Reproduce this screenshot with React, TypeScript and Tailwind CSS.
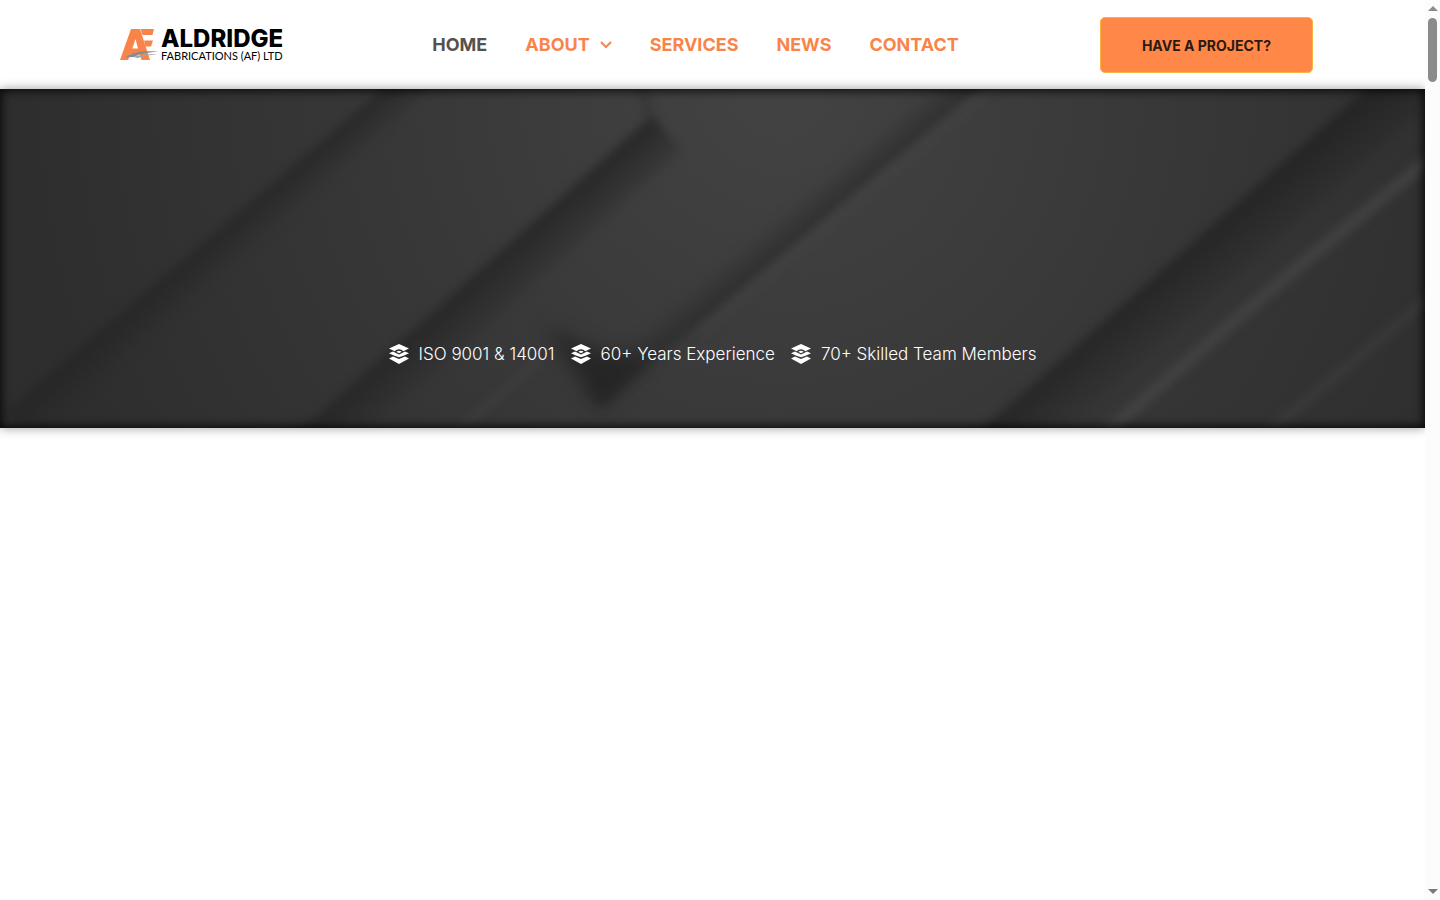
import React from 'react';

interface NavItem {
  label: string;
  active?: boolean;
  hasMenu?: boolean;
}

const navItems: NavItem[] = [
  { label: 'HOME', active: true },
  { label: 'ABOUT', hasMenu: true },
  { label: 'SERVICES' },
  { label: 'NEWS' },
  { label: 'CONTACT' },
];

const highlights = ['ISO 9001 & 14001', '60+ Years Experience', '70+ Skilled Team Members'];

function Logo() {
  return (
    <a href="#home" aria-label="Aldridge Fabrications (AF) Ltd" className="flex items-center px-2">
      <svg viewBox="0 0 40 34" className="h-[34px] w-10 shrink-0" aria-hidden="true">
        <path d="M11 1H20L30 32H21.500L19.500 26H10.500L8 32H0Z" fill="#f9844a" />
        <path d="M20.500 1H34L32.500 7H22.500Z" fill="#f9844a" />
        <path d="M24 12.500H33L31 18.500H25.500Z" fill="#f9844a" />
        <path d="M15.500 11L12.300 20.500H18Z" fill="#fff" />
        <path d="M5 29.500C13 24 20 22.500 39 23.500C29 24.500 21 25 14 29Z" fill="#8b8b8b" />
        <path d="M13 29C21 26 28 26 38 26.500C29 27 23 28 18 30Z" fill="#a3a3a3" />
      </svg>
      <span className="flex flex-col gap-px pl-px text-black">
        <span className="text-[24px] leading-5 font-extrabold">ALDRIDGE</span>
        <span className="font-['Lato',sans-serif] text-[11px] leading-3">FABRICATIONS (AF) LTD</span>
      </span>
    </a>
  );
}

function LayersIcon() {
  return (
    <svg viewBox="0 0 20 20" className="size-5 shrink-0" fill="currentColor" aria-hidden="true">
      <path d="M10 0L20 4.600L14.300 7.200Q12.500 5.200 10 5.200Q7.500 5.200 5.700 7.200L0 4.600Z" />
      <path d="M7.300 7.800Q10 5.600 12.700 7.800L10 9.200Z" />
      <path d="M0 9.300L4 7.500L10 10.400L16 7.500L20 9.300L14.500 11.800L10 13.200L5.500 11.800Z" />
      <path d="M0 14.500L4 12.400L10 15L16 12.400L20 14.500L10 20Z" />
    </svg>
  );
}

function Header() {
  return (
    <header className="border-t border-white bg-white py-4">
      <div className="mx-auto flex max-w-[1201px] items-center justify-between">
        <Logo />
        <nav className="flex items-center gap-[38px]">
          {navItems.map((item) => (
            <a
              key={item.label}
              href={`#${item.label.toLowerCase()}`}
              className={`flex items-center gap-[10px] text-[18px] leading-6 font-bold ${
                item.active ? 'text-[#54514f]' : 'text-[#f9844a]'
              }`}
            >
              {item.label}
              {item.hasMenu && (
                <svg viewBox="0 0 12 8" className="h-2 w-3" fill="none" stroke="currentColor" strokeWidth="2" aria-hidden="true">
                  <path d="M1 1L6 6L11 1" />
                </svg>
              )}
            </a>
          ))}
        </nav>
        <button
          type="button"
          className="h-14 rounded-[5px] border border-[#fcb040] bg-[#ff8748] px-[41px] text-[14px] font-bold text-[#2b1a12]"
        >
          HAVE A PROJECT?
        </button>
      </div>
    </header>
  );
}

function HeroBackground() {
  return (
    <svg
      viewBox="0 0 1425 339"
      preserveAspectRatio="none"
      className="absolute inset-0 h-full w-full"
      aria-hidden="true"
    >
      <defs>
        <radialGradient id="base" gradientUnits="userSpaceOnUse" cx="780" cy="0" r="760">
          <stop offset="0" stopColor="#434343" />
          <stop offset="0.5" stopColor="#383838" />
          <stop offset="1" stopColor="#2e2e2e" />
        </radialGradient>
        <linearGradient id="fold1" gradientUnits="userSpaceOnUse" x1="200" y1="155" x2="226" y2="185">
          <stop offset="0" stopColor="#242424" stopOpacity="0.8" />
          <stop offset="1" stopColor="#242424" stopOpacity="0" />
        </linearGradient>
        <linearGradient id="fold2" gradientUnits="userSpaceOnUse" x1="480" y1="176" x2="519" y2="221">
          <stop offset="0" stopColor="#232323" stopOpacity="0.85" />
          <stop offset="1" stopColor="#232323" stopOpacity="0" />
        </linearGradient>
        <linearGradient id="fold3" gradientUnits="userSpaceOnUse" x1="768" y1="176" x2="748" y2="152">
          <stop offset="0" stopColor="#272727" stopOpacity="0.65" />
          <stop offset="1" stopColor="#272727" stopOpacity="0" />
        </linearGradient>
        <linearGradient id="fold4" gradientUnits="userSpaceOnUse" x1="1190" y1="152" x2="1236" y2="205">
          <stop offset="0" stopColor="#202020" stopOpacity="0.8" />
          <stop offset="1" stopColor="#202020" stopOpacity="0" />
        </linearGradient>
        <filter id="soft" x="-10%" y="-10%" width="120%" height="120%" colorInterpolationFilters="sRGB">
          <feGaussianBlur stdDeviation="5" />
        </filter>
        <filter id="softer" x="-30%" y="-30%" width="160%" height="160%" colorInterpolationFilters="sRGB">
          <feGaussianBlur stdDeviation="9" />
        </filter>
      </defs>
      <rect width="1425" height="339" fill="url(#base)" />
      <g filter="url(#soft)">
        <path d="M406 -20L5 324L45 360L450 -20Z" fill="url(#fold1)" />
        <path d="M652 27L280 360H350L682 62Z" fill="url(#fold2)" />
        <path d="M1000 -20L600 318L565 280L960 -50Z" fill="url(#fold3)" />
        <path d="M1400 -30L960 360H1050L1480 -30Z" fill="url(#fold4)" />
        <path d="M638 -10L652 32" stroke="#2b2b2b" strokeOpacity="0.4" strokeWidth="8" />
      </g>
      <path d="M545 238L600 320L650 270L600 262Z" fill="#222" fillOpacity="0.8" filter="url(#softer)" />
      <g filter="url(#soft)" fill="none" stroke="#4b4b4b">
        <path d="M1430 70L1310 168L1227 238L1105 345" strokeWidth="12" strokeOpacity="0.6" />
        <path d="M1430 208L1270 342" strokeWidth="9" strokeOpacity="0.35" />
        <path d="M1000 -8L700 245" strokeWidth="6" strokeOpacity="0.4" />
        <path d="M540 270L455 345" strokeWidth="8" strokeOpacity="0.3" />
      </g>
    </svg>
  );
}

function Hero() {
  return (
    <section className="relative bg-[#333] pt-[250px] pb-[59px] shadow-[0_0_10px_rgba(0,0,0,0.4)]">
      <HeroBackground />
      <div className="absolute inset-0 shadow-[inset_0_0_10px_2px_rgba(0,0,0,0.8)]" />
      <ul className="relative flex items-center justify-center gap-4 text-[17px] leading-[30px] font-light text-white">
        {highlights.map((text) => (
          <li key={text} className="flex items-center gap-[10px]">
            <LayersIcon />
            {text}
          </li>
        ))}
      </ul>
    </section>
  );
}

function ScrollRail() {
  return (
    <div className="flex w-[15px] shrink-0 flex-col items-center justify-between bg-[#fcfcfc] py-[6px]" aria-hidden="true">
      <div className="flex flex-col items-center gap-[7px]">
        <svg viewBox="0 0 10 5" className="h-[5px] w-[10px]" fill="#8b8b8b">
          <path d="M0 5L5 0L10 5Z" />
        </svg>
        <div className="h-16 w-[9px] rounded-full bg-[#8b8b8b]" />
      </div>
      <svg viewBox="0 0 10 5" className="h-[5px] w-[10px]" fill="#7a7a7a">
        <path d="M0 0L5 5L10 0Z" />
      </svg>
    </div>
  );
}

export default function App() {
  return (
    <div className="flex min-h-screen bg-white font-['Inter',sans-serif]">
      <main className="min-w-0 flex-1 overflow-hidden">
        <Header />
        <Hero />
      </main>
      <ScrollRail />
    </div>
  );
}
